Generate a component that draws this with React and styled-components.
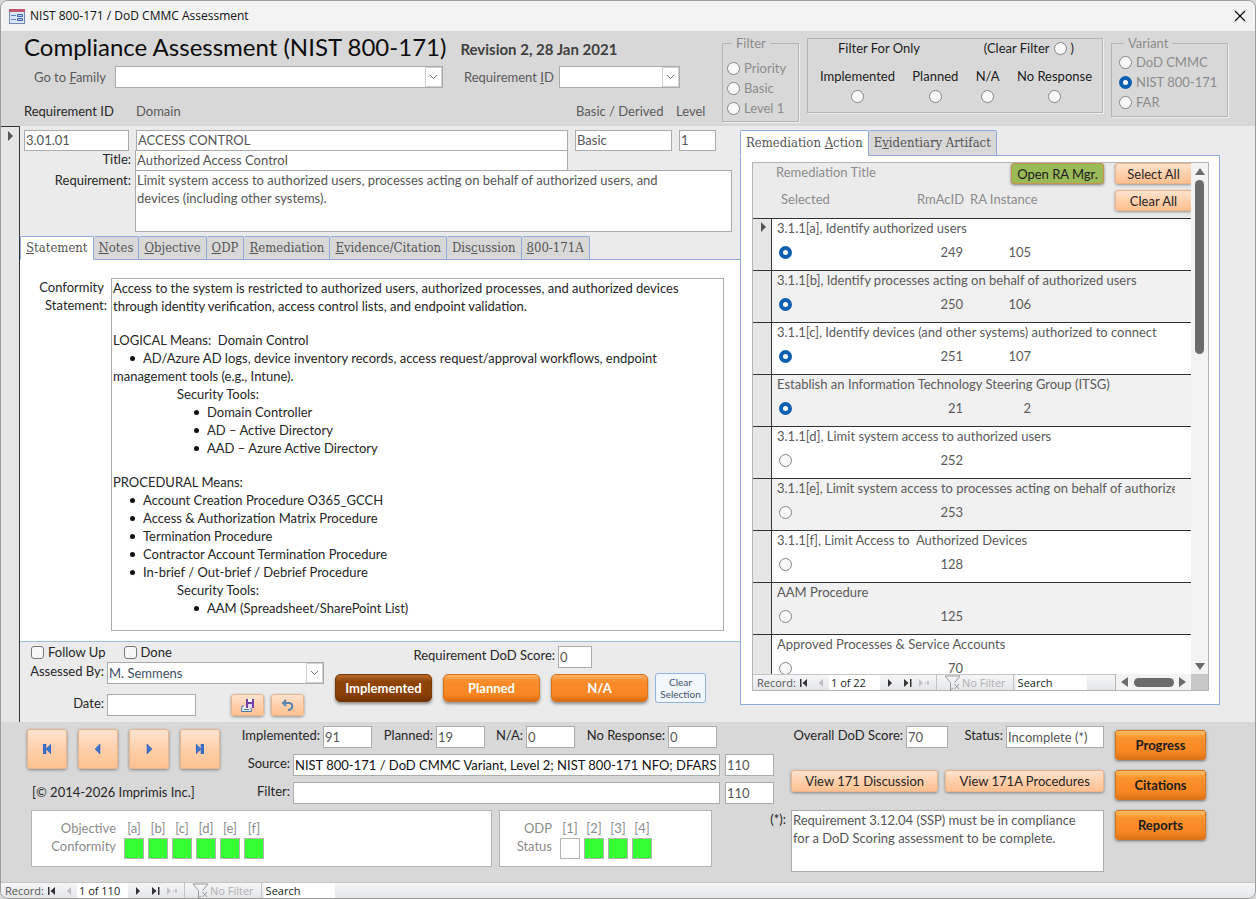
import { useState } from 'react';
import styled, { createGlobalStyle, css } from 'styled-components';

const statementTabs = [
    ['', 'S', 'tatement'],
    ['', 'N', 'otes'],
    ['', 'O', 'bjective'],
    ['', 'O', 'DP'],
    ['', 'R', 'emediation'],
    ['', 'E', 'vidence/Citation'],
    ['Dis', 'c', 'ussion'],
    ['', '8', '00-171A'],
];

const actionTabs = [
    ['Remediation ', 'A', 'ction'],
    ['E', 'v', 'identiary Artifact'],
];

const actions = [
    { title: '3.1.1[a], Identify authorized users', id: 249, instance: 105, selected: true },
    { title: '3.1.1[b], Identify processes acting on behalf of authorized users', id: 250, instance: 106, selected: true },
    { title: '3.1.1[c], Identify devices (and other systems) authorized to connect', id: 251, instance: 107, selected: true },
    { title: 'Establish an Information Technology Steering Group (ITSG)', id: 21, instance: 2, selected: true },
    { title: '3.1.1[d], Limit system access to authorized users', id: 252 },
    { title: '3.1.1[e], Limit system access to processes acting on behalf of authorized users', id: 253 },
    { title: '3.1.1[f], Limit Access to  Authorized Devices', id: 128 },
    { title: 'AAM Procedure', id: 125 },
    { title: 'Approved Processes & Service Accounts', id: 70 },
];

const requirementText = 'Limit system access to authorized users, processes acting on behalf of authorized users, and\ndevices (including other systems).';
const noteText = 'Requirement 3.12.04 (SSP) must be in compliance\nfor a DoD Scoring assessment to be complete.';

const App = () => {
    return (
        <>
            <GlobalStyle />
            <Window>
                <TitleBar>
                    <FormIcon />
                    <span>NIST 800-171 / DoD CMMC Assessment</span>
                    <CloseButton aria-label="Close">
                        <svg width="12" height="12" viewBox="0 0 12 12" stroke="#111" strokeWidth="1.2">
                            <path d="M1 1L11 11M11 1L1 11" />
                        </svg>
                    </CloseButton>
                </TitleBar>
                <FormHeader />
                <Detail>
                    <RecordSelector><RightArrow /></RecordSelector>
                    <RequirementForm />
                    <RemediationPane />
                </Detail>
                <FormFooter />
                <RecordNav position="1 of 110" />
            </Window>
        </>
    );
};

/* top band: title, go-to combos and filters */
const FormHeader = () => {
    const [variant, setVariant] = useState('NIST 800-171');

    return (
        <Header>
            <HeaderMain>
                <TitleRow>
                    <h1>Compliance Assessment (NIST 800-171)</h1>
                    <strong>Revision 2, 28 Jan 2021</strong>
                </TitleRow>
                <GoToRow>
                    <label htmlFor="family">Go to <u>F</u>amily</label>
                    <Combo id="family" grow />
                    <label htmlFor="goto-req">Requirement <u>I</u>D</label>
                    <Combo id="goto-req" width={121} />
                </GoToRow>
                <ColumnTitles>
                    <b>Requirement ID</b>
                    <span>Domain</span>
                    <span>Basic / Derived</span>
                    <span>Level</span>
                </ColumnTitles>
            </HeaderMain>
            <Group $width={77} $pad="6px 0 3px 4px">
                <legend>Filter</legend>
                {['Priority', 'Basic', 'Level 1'].map(name => (
                    <RadioLine key={name}><Radio name="filter" />{name}</RadioLine>
                ))}
            </Group>
            <FilterOnly>
                <FilterOnlyTitle>
                    <span>Filter For Only</span>
                    <label>(Clear Filter <Radio name="only" />)</label>
                </FilterOnlyTitle>
                <FilterOnlyOptions>
                    {['Implemented', 'Planned', 'N/A', 'No Response'].map(name => (
                        <label key={name}>{name}<Radio name="only" /></label>
                    ))}
                </FilterOnlyOptions>
            </FilterOnly>
            <Group $width={117} $pad="0 0 4px 7px">
                <legend>Variant</legend>
                {['DoD CMMC', 'NIST 800-171', 'FAR'].map(name => (
                    <RadioLine key={name}>
                        <Radio name="variant" checked={variant === name} onChange={() => setVariant(name)} />
                        {name}
                    </RadioLine>
                ))}
            </Group>
        </Header>
    );
};

/* left side of the detail section */
const RequirementForm = () => {
    const [tab, setTab] = useState(0);

    return (
        <FormColumn>
            <FieldGrid>
                <Field aria-label="Requirement ID" defaultValue="3.01.01" />
                <Field aria-label="Domain" defaultValue="ACCESS CONTROL" />
                <Field aria-label="Basic / Derived" defaultValue="Basic" />
                <Field aria-label="Level" defaultValue="1" />
            </FieldGrid>
            <TitleGrid>
                <label htmlFor="title">Title:</label>
                <Field id="title" defaultValue="Authorized Access Control" />
            </TitleGrid>
            <RequirementGrid>
                <label htmlFor="requirement">Requirement:</label>
                <TextArea id="requirement" $height={62} defaultValue={requirementText} />
            </RequirementGrid>
            <Tabs items={statementTabs} active={tab} onSelect={setTab} />
            <StatementPanel>
                <span id="conformity">Conformity&nbsp;<br />Statement:</span>
                <RichText
                    role="textbox"
                    aria-multiline="true"
                    aria-labelledby="conformity"
                    contentEditable
                    suppressContentEditableWarning
                >
                    <section>
                        Access to the system is restricted to authorized users, authorized processes, and authorized devices
                        through identity verification, access control lists, and endpoint validation.
                    </section>
                    <section>
                        LOGICAL Means:&nbsp; Domain Control
                        <ul>
                            <li>AD/Azure AD logs, device inventory records, access request/approval workflows, endpoint<br />management tools (e.g., Intune).</li>
                        </ul>
                        <Nested>
                            Security Tools:
                            <ul>
                                <li>Domain Controller</li>
                                <li>AD – Active Directory</li>
                                <li>AAD – Azure Active Directory</li>
                            </ul>
                        </Nested>
                    </section>
                    <section>
                        PROCEDURAL Means:
                        <ul>
                            <li>Account Creation Procedure O365_GCCH</li>
                            <li>Access &amp; Authorization Matrix Procedure</li>
                            <li>Termination Procedure</li>
                            <li>Contractor Account Termination Procedure</li>
                            <li>In-brief / Out-brief / Debrief Procedure</li>
                        </ul>
                        <Nested>
                            Security Tools:
                            <ul>
                                <li>AAM (Spreadsheet/SharePoint List)</li>
                            </ul>
                        </Nested>
                    </section>
                </RichText>
            </StatementPanel>
            <Assessment>
                <AssessedBy>
                    <Checks>
                        <label><CheckBox type="checkbox" />Follow Up</label>
                        <label><CheckBox type="checkbox" />Done</label>
                    </Checks>
                    <AssessRow>
                        <label htmlFor="assessor">Assessed By:</label>
                        <Combo id="assessor" grow value="M. Semmens" />
                    </AssessRow>
                    <AssessRow $gap={10}>
                        <label htmlFor="date">Date:</label>
                        <Field id="date" $width={89} />
                        <IconButtons>
                            <PeachButton $width={33} aria-label="Save"><SaveIcon /></PeachButton>
                            <PeachButton $width={33} aria-label="Undo"><UndoIcon /></PeachButton>
                        </IconButtons>
                    </AssessRow>
                </AssessedBy>
                <ScoreColumn>
                    <Score>
                        <label htmlFor="req-score">Requirement DoD Score:</label>
                        <Field id="req-score" $width={34} defaultValue="0" />
                    </Score>
                    <StatusButtons>
                        <StatusButton $pressed>Implemented</StatusButton>
                        <StatusButton>Planned</StatusButton>
                        <StatusButton>N/A</StatusButton>
                        <ClearButton>Clear<br />Selection</ClearButton>
                    </StatusButtons>
                </ScoreColumn>
            </Assessment>
        </FormColumn>
    );
};

/* right side: remediation subform */
const RemediationPane = () => {
    const [tab, setTab] = useState(0);
    const [selected, setSelected] = useState(actions.map(a => !!a.selected));

    const toggle = index => setSelected(selected.map((s, i) => (i === index ? !s : s)));
    const setAll = value => setSelected(actions.map(() => value));

    return (
        <Pane>
            <Tabs items={actionTabs} active={tab} onSelect={setTab} tall />
            <PanePanel>
                <Subform>
                    <SubBody>
                        <SubContent>
                            <SubHeader>
                                <SubTitles>
                                    <span>Remediation Title</span>
                                    <div>
                                        <span>Selected</span>
                                        <span>RmAcID</span>
                                        <span>RA Instance</span>
                                    </div>
                                </SubTitles>
                                <ManagerButton>Open RA Mgr.</ManagerButton>
                                <SelectButtons>
                                    <PeachButton onClick={() => setAll(true)}>Select All</PeachButton>
                                    <PeachButton onClick={() => setAll(false)}>Clear All</PeachButton>
                                </SelectButtons>
                            </SubHeader>
                            <ActionList>
                                {actions.map((action, i) => (
                                    <ActionRow key={action.id}>
                                        <ActionSelector>{i === 0 && <RightArrow />}</ActionSelector>
                                        <ActionCell>
                                            <p>{action.title}</p>
                                            <ActionValues>
                                                <Radio
                                                    aria-label={action.title}
                                                    checked={selected[i]}
                                                    onClick={() => toggle(i)}
                                                    onChange={() => {}}
                                                />
                                                <span>{action.id}</span>
                                                <span>{action.instance}</span>
                                            </ActionValues>
                                        </ActionCell>
                                    </ActionRow>
                                ))}
                            </ActionList>
                        </SubContent>
                        <VScroll>
                            <svg width="10" height="7" viewBox="0 0 10 7" fill="#6b6b6b"><path d="M5 0L10 7H0Z" /></svg>
                            <VThumb />
                            <svg width="10" height="7" viewBox="0 0 10 7" fill="#6b6b6b"><path d="M0 0H10L5 7Z" /></svg>
                        </VScroll>
                    </SubBody>
                    <SubFoot>
                        <RecordNav position="1 of 22" />
                        <HScroll>
                            <svg width="7" height="10" viewBox="0 0 7 10" fill="#6b6b6b"><path d="M7 0V10L0 5Z" /></svg>
                            <HThumb />
                            <svg width="7" height="10" viewBox="0 0 7 10" fill="#6b6b6b"><path d="M0 0L7 5L0 10Z" /></svg>
                        </HScroll>
                        <ScrollCorner />
                    </SubFoot>
                </Subform>
            </PanePanel>
        </Pane>
    );
};

const FormFooter = () => {
    return (
        <Footer>
            <FooterMain>
                <FooterTop>
                    <FooterNav>
                        <NavButtons>
                            <NavButton aria-label="First record"><NavIcon d="M0 0H3V10H0ZM8 0V10L3 5Z" /></NavButton>
                            <NavButton aria-label="Previous record"><NavIcon d="M6 0V10L1 5Z" /></NavButton>
                            <NavButton aria-label="Next record"><NavIcon d="M2 0L7 5L2 10Z" /></NavButton>
                            <NavButton aria-label="Last record"><NavIcon d="M0 0L5 5L0 10ZM5 0H8V10H5Z" /></NavButton>
                        </NavButtons>
                        <span>[© 2014-2026 Imprimis Inc.]</span>
                    </FooterNav>
                    <FooterFields>
                        <Totals>
                            <label>Implemented:<Field $width={49} defaultValue="91" /></label>
                            <label>Planned:<Field $width={49} defaultValue="19" /></label>
                            <label>N/A:<Field $width={49} defaultValue="0" /></label>
                            <label>No Response:<Field $width={49} defaultValue="0" /></label>
                        </Totals>
                        <SourceRow>
                            <label htmlFor="source">Source:</label>
                            <Field id="source" $dark defaultValue="NIST 800-171 / DoD CMMC Variant, Level 2; NIST 800-171 NFO; DFARS" />
                            <Field aria-label="Source count" defaultValue="110" />
                        </SourceRow>
                        <SourceRow>
                            <label htmlFor="filter-text">Filter:</label>
                            <Field id="filter-text" />
                            <Field aria-label="Filter count" defaultValue="110" />
                        </SourceRow>
                    </FooterFields>
                </FooterTop>
                <StatusBoxes>
                    <StatusBox $grow>
                        <StatusLabel $width={84}>Objective<br />Conformity</StatusLabel>
                        {['a', 'b', 'c', 'd', 'e', 'f'].map(key => <StatusFlag key={key} name={key} met />)}
                    </StatusBox>
                    <StatusBox>
                        <StatusLabel $width={52}>ODP<br />Status</StatusLabel>
                        {['1', '2', '3', '4'].map(key => <StatusFlag key={key} name={key} met={key !== '1'} />)}
                    </StatusBox>
                </StatusBoxes>
            </FooterMain>
            <ScorePane>
                <Overall>
                    <label>Overall DoD Score:<Field $width={42} defaultValue="70" /></label>
                    <label>Status:<Field $width={98} defaultValue="Incomplete (*)" /></label>
                </Overall>
                <ViewButtons>
                    <PeachButton>View 171 Discussion</PeachButton>
                    <PeachButton>View 171A Procedures</PeachButton>
                </ViewButtons>
                <Note>
                    <label htmlFor="note">(*):</label>
                    <TextArea id="note" $height={62} defaultValue={noteText} />
                </Note>
            </ScorePane>
            <ReportButtons>
                <OrangeButton>Progress</OrangeButton>
                <OrangeButton>Citations</OrangeButton>
                <OrangeButton>Reports</OrangeButton>
            </ReportButtons>
        </Footer>
    );
};

const Tabs = ({ items, active, onSelect, tall }) => (
    <TabStrip role="tablist">
        {items.map(([before, key, after], i) => (
            <Tab
                key={before + key + after}
                role="tab"
                aria-selected={i === active}
                $active={i === active}
                $tall={tall}
                onClick={() => onSelect(i)}
            >
                {before}<u>{key}</u>{after}
            </Tab>
        ))}
    </TabStrip>
);

const Combo = ({ id, value = '', width, grow }) => (
    <ComboBox $width={width} $grow={grow}>
        <select id={id} defaultValue={value}>
            <option>{value}</option>
        </select>
        <ComboArrow>
            <svg width="9" height="6" viewBox="0 0 9 6" fill="none" stroke="#777"><path d="M1 1L4.5 4.5L8 1" /></svg>
        </ComboArrow>
    </ComboBox>
);

const StatusFlag = ({ name, met }) => (
    <Flag>
        <span>[{name}]</span>
        <FlagLight $met={met} />
    </Flag>
);

const RecordNav = ({ position }) => (
    <NavBar>
        <NavLabel>Record:</NavLabel>
        <NavStep aria-label="First"><svg width="8" height="8" viewBox="0 0 8 8" fill="#333"><path d="M0 0H1.5V8H0ZM7 0V8L2.500 4Z" /></svg></NavStep>
        <NavStep aria-label="Previous"><svg width="8" height="8" viewBox="0 0 8 8" fill="#bbb"><path d="M6 0V8L2 4Z" /></svg></NavStep>
        <NavField aria-label="Record position" $width={51} defaultValue={position} />
        <NavStep aria-label="Next" $wide><svg width="8" height="8" viewBox="0 0 8 8" fill="#333"><path d="M2 0L6 4L2 8Z" /></svg></NavStep>
        <NavStep aria-label="Last"><svg width="8" height="8" viewBox="0 0 8 8" fill="#333"><path d="M0 0L4.500 4L0 8ZM6 0H7.500V8H6Z" /></svg></NavStep>
        <NavStep aria-label="New"><svg width="12" height="8" viewBox="0 0 12 8" fill="#c4c4c4"><path d="M0 0L4 4L0 8ZM6 3H7V5H6ZM8 2H10V6H8Z" /></svg></NavStep>
        <NavFilter>
            <svg width="17" height="16" viewBox="0 0 17 16" fill="none" stroke="#9a9a9a">
                <path d="M1 1H16L10.500 7.500M1 1L6.500 7.500V15L9 13M10.500 9L15 14M15 9L10.500 14" />
            </svg>
            No Filter
        </NavFilter>
        <NavField aria-label="Search" $width={71} defaultValue="Search" />
    </NavBar>
);

const Radio = props => <RadioInput type="radio" {...props} />;

const RightArrow = () => (
    <svg width="5" height="10" viewBox="0 0 5 10" fill="#555"><path d="M0 0L5 5L0 10Z" /></svg>
);

const NavIcon = ({ d }) => (
    <svg width="8" height="10" viewBox="0 0 8 10">
        <path d={d} fill="#3f74cf" stroke="#2450a8" strokeWidth="0.5" />
    </svg>
);

const FormIcon = () => (
    <svg width="16" height="15" viewBox="0 0 16 15">
        <rect x="0.5" y="0.5" width="15" height="14" fill="#dbe7f8" stroke="#6f88b8" />
        <rect x="0" y="0" width="16" height="3" fill="#c0566f" />
        <path d="M2 6.500H7M2 10.500H7" stroke="#5b80c4" />
        <path d="M8.500 5.500H13.500V7.500H8.500ZM8.500 9.500H13.500V11.500H8.500Z" fill="#b9cdf0" stroke="#3f63ac" />
    </svg>
);

const SaveIcon = () => (
    <svg width="14" height="13" viewBox="0 0 14 13">
        <path d="M3 7H1L0.500 12.500H10.500L10 9" fill="#e9f0f8" stroke="#4a7ba8" />
        <path d="M5 0H13V9H5Z" fill="#7340a8" />
        <path d="M7 0H11V3H7Z" fill="#fff" />
        <path d="M7 5H11V9H7Z" fill="#e4d8f2" />
        <path d="M3 10.500H8" stroke="#4a7ba8" />
    </svg>
);

const UndoIcon = () => (
    <svg width="13" height="12" viewBox="0 0 13 12" fill="none" stroke="#5a83ad" strokeWidth="2">
        <path d="M5 1L2 4L5 7M2 4H8C12.500 4 12.500 10.500 7 11" />
    </svg>
);

const GlobalStyle = createGlobalStyle`
    * {
        box-sizing: border-box;
    }

    body {
        margin: 0;
        background: #d8d8d8;
        color: #262626;
        font: 13px/18px Lato, Carlito, sans-serif;
    }

    h1, p, ul, fieldset {
        margin: 0;
        padding: 0;
    }

    button, input, select, textarea {
        font: inherit;
        color: inherit;
        margin: 0;
    }

    button {
        cursor: pointer;
        padding: 0;
        white-space: nowrap;
    }

    label {
        white-space: nowrap;
    }
`

const Window = styled.main`
    display: flex;
    flex-direction: column;
    min-width: 1180px;
    min-height: 100vh;
    border: 1px solid #9c9c9c;
    border-radius: 8px;
    overflow: hidden;
    background: #ebebeb;
`

const TitleBar = styled.div`
    display: flex;
    align-items: center;
    gap: 5px;
    height: 30px;
    padding: 0 8px;
    background: #f3f3f3;
    color: #111;
    font: 12px/16px "Open Sans", "Noto Sans", sans-serif;
`

const CloseButton = styled.button`
    display: flex;
    margin-left: auto;
    padding: 1px;
    border: 0;
    background: none;
`

const Header = styled.header`
    display: flex;
    align-items: flex-start;
    gap: 8px;
    padding: 0 27px 0 23px;
    background: #d8d8d8;
    color: #5a5a5a;
`

const HeaderMain = styled.div`
    flex: 1;
    padding-bottom: 6px;
`

const TitleRow = styled.div`
    display: flex;
    align-items: center;
    gap: 14px;
    height: 32px;
    margin-bottom: 3px;

    h1 {
        font-size: 24px;
        font-weight: normal;
        line-height: 32px;
        color: #0c0c0c;
        white-space: nowrap;
    }

    strong {
        padding-top: 4px;
        font-size: 15px;
        color: #404040;
    }
`

const GoToRow = styled.div`
    display: flex;
    align-items: center;
    gap: 6px;
    padding: 0 34px 0 10px;

    label:first-of-type {
        width: 75px;
    }

    label:nth-of-type(2) {
        width: 89px;
        margin-left: 15px;
    }
`

const ColumnTitles = styled.div`
    display: grid;
    grid-template-columns: 112px 1fr 100px 38px;
    margin-top: 14px;

    b {
        font-weight: normal;
        color: #262626;
    }
`

const ComboBox = styled.div`
    position: relative;
    flex: ${({ $grow }) => ($grow ? '1' : 'none')};
    width: ${({ $width }) => ($width ? `${$width}px` : 'auto')};

    select {
        appearance: none;
        display: block;
        width: 100%;
        height: 22px;
        padding: 0 18px 0 1px;
        border: 1px solid #ababab;
        border-radius: 0;
        background: #fff;
        color: #3d4d63;
    }
`

const ComboArrow = styled.span`
    position: absolute;
    top: 1px;
    right: 1px;
    bottom: 1px;
    display: flex;
    align-items: center;
    justify-content: center;
    width: 17px;
    border: 1px solid #d0d0d0;
    background: #fff;
    pointer-events: none;
`

const Group = styled.fieldset`
    width: ${({ $width }) => $width}px;
    margin-top: 3px;
    padding: ${({ $pad }) => $pad};
    border: 1px solid #b4b4b4;
    box-shadow: 1px 1px #efefef;
    color: #8c8c8c;

    legend {
        margin-left: 5px;
        padding: 0 4px;
        background: #d8d8d8;
    }
`

const RadioLine = styled.label`
    display: flex;
    align-items: center;
    gap: 4px;
    height: 20px;
`

const RadioInput = styled.input`
    appearance: none;
    flex: none;
    width: 13px;
    height: 13px;
    border: 1px solid #858585;
    border-radius: 50%;
    background: #f9f9f9;

    &:checked {
        border: 4px solid #0b5fb0;
        background: #fff;
    }
`

const FilterOnly = styled.div`
    width: 296px;
    height: 75px;
    margin-top: 7px;
    padding: 0 10px 0 12px;
    border: 1px solid #b4b4b4;
    box-shadow: 1px 1px #efefef;
    color: #1c1c1c;
`

const FilterOnlyTitle = styled.div`
    display: flex;
    justify-content: space-between;
    margin-bottom: 10px;
    padding: 0 18px;

    label {
        display: flex;
        align-items: center;
        gap: 4px;
    }
`

const FilterOnlyOptions = styled.div`
    display: flex;
    justify-content: space-between;

    label {
        display: flex;
        flex-direction: column;
        align-items: center;
        gap: 5px;
    }
`

const Detail = styled.div`
    display: flex;
    flex: 1;
    padding-right: 35px;
`

const RecordSelector = styled.div`
    width: 19px;
    padding: 4px 0 0 7px;
    border-top: 1px solid #333;
    border-right: 1px solid #333;
    background: #e6e6e6;
    line-height: 10px;
`

const FormColumn = styled.section`
    display: flex;
    flex: 3 1 0;
    flex-direction: column;
    min-width: 0;
    padding-top: 4px;
`

const Field = styled.input`
    min-width: 0;
    width: ${({ $width }) => ($width ? `${$width}px` : '100%')};
    height: 22px;
    padding: 0 1px 1px;
    border: 1px solid #ababab;
    background: #fff;
    color: ${({ $dark }) => ($dark ? '#111' : '#555')};
`

const TextArea = styled.textarea`
    display: block;
    width: 100%;
    height: ${({ $height }) => $height}px;
    padding: 0 1px;
    border: 1px solid #ababab;
    background: #fff;
    color: #555;
    resize: none;
    overflow: hidden;
`

const FieldGrid = styled.div`
    display: grid;
    grid-template-columns: 105px 1fr 97px 37px;
    gap: 7px;
    margin-bottom: -1px;
    padding: 0 24px 0 4px;

    input {
        height: 21px;
    }
`

const labelled = css`
    display: grid;
    gap: 4px;

    label {
        text-align: right;
    }
`

const TitleGrid = styled.div`
    ${labelled}
    grid-template-columns: 111px 1fr;
    margin-bottom: -1px;
    padding-right: 172px;

    input {
        height: 21px;
    }
`

const RequirementGrid = styled.div`
    ${labelled}
    grid-template-columns: 111px 1fr;
    padding-right: 8px;

    label {
        padding-top: 1px;
    }
`

const TabStrip = styled.div`
    display: flex;
    margin-top: 4px;
`

const Tab = styled.button`
    height: ${({ $tall }) => ($tall ? 26 : 24)}px;
    margin-bottom: -1px;
    padding: 0 5px;
    border: 1px solid #8faadc;
    border-left-width: ${({ $active }) => ($active ? 1 : 0)}px;
    border-bottom-color: ${({ $active }) => ($active ? '#fff' : '#8faadc')};
    border-radius: 2px 2px 0 0;
    background: ${({ $active }) => ($active ? '#fff' : '#d8d8d8')};
    color: #555;
    font: 13px/18px "DejaVu Serif Condensed", "DejaVu Serif", serif;
    z-index: 1;
`

const StatementPanel = styled.div`
    display: grid;
    flex: 1;
    grid-template-columns: 87px 1fr;
    gap: 4px;
    padding: 18px 16px 10px 0;
    border-top: 1px solid #8faadc;
    border-bottom: 1px solid #9dbce0;
    background: #fff;
    text-align: right;
`

const RichText = styled.div`
    padding: 0 1px;
    border: 1px solid #ababab;
    text-align: left;
    outline: none;

    section + section {
        margin-top: 16px;
    }

    ul {
        list-style: none;
    }

    li {
        text-indent: 17px;
    }

    li::before {
        content: '';
        display: inline-block;
        width: 5px;
        height: 5px;
        margin-right: 8px;
        border-radius: 50%;
        background: #111;
        vertical-align: 2px;
    }
`

const Nested = styled.div`
    padding-left: 64px;
`

const Assessment = styled.div`
    display: flex;
    gap: 11px;
    height: 80px;
`

const AssessedBy = styled.div`
    width: 304px;
`

const Checks = styled.div`
    display: flex;
    gap: 18px;
    padding-left: 11px;

    label {
        display: flex;
        align-items: center;
        gap: 4px;
        height: 20px;
    }
`

const CheckBox = styled.input`
    appearance: none;
    width: 13px;
    height: 13px;
    border: 1px solid #777;
    border-radius: 3px;
    background: #f7f7f7;

    &:checked {
        background: #0b5fb0;
    }
`

const AssessRow = styled.div`
    display: flex;
    gap: 3px;
    margin-top: ${({ $gap }) => $gap || 0}px;

    > label {
        width: 84px;
        text-align: right;
    }
`

const IconButtons = styled.div`
    display: flex;
    flex: 1;
    justify-content: flex-end;
    gap: 7px;
    padding-right: 20px;
`

const ScoreColumn = styled.div`
    flex: 1;
    padding-top: 4px;
`

const Score = styled.div`
    display: flex;
    gap: 3px;
    margin-bottom: 5px;
    padding-left: 76px;

    label {
        width: 144px;
        text-align: right;
    }
`

const StatusButtons = styled.div`
    display: flex;
    align-items: center;
    gap: 11px;
`

const StatusButton = styled.button`
    width: 97px;
    height: 28px;
    border: 1px solid ${({ $pressed }) => ($pressed ? '#7a3a08' : '#d9751c')};
    border-radius: 5px;
    background: ${({ $pressed }) => ($pressed
        ? 'linear-gradient(#b86a2c, #8f4408 25%, #8a3f06 75%, #6f3204)'
        : 'linear-gradient(#ffb066, #fb8c2a 25%, #f98622 75%, #d96c12)')};
    box-shadow: 0 2px 3px rgba(0, 0, 0, 0.4);
    color: #fff;
    font-weight: bold;
`

const ClearButton = styled.button`
    width: 51px;
    height: 30px;
    margin-left: -4px;
    border: 1px solid #8fb4e0;
    border-radius: 3px;
    background: #f2f7fd;
    color: #44546a;
    font-size: 10px;
    line-height: 12px;
`

const PeachButton = styled.button`
    display: flex;
    flex: ${({ $width }) => ($width ? 'none' : '1 1 auto')};
    align-items: center;
    justify-content: center;
    width: ${({ $width }) => ($width ? `${$width}px` : 'auto')};
    height: 22px;
    border: 1px solid #eeb48a;
    border-radius: 3px;
    background: linear-gradient(#ffe3cf, #ffd0ac 50%, #ffc191);
    box-shadow: 0 1px 3px rgba(0, 0, 0, 0.4);
    color: #262626;
`

const Pane = styled.section`
    display: flex;
    flex: 2 1 0;
    flex-direction: column;
    min-width: 0;
    padding-bottom: 17px;
`

const PanePanel = styled.div`
    display: flex;
    flex: 1;
    padding: 6px 10px 13px 11px;
    border: 1px solid #8faadc;
    background: #fff;
`

const Subform = styled.div`
    display: flex;
    flex: 1;
    flex-direction: column;
    min-width: 0;
    border: 1px solid #b4b4b4;
`

const SubBody = styled.div`
    display: flex;
    flex: 1 1 0;
    min-height: 0;
`

const SubContent = styled.div`
    display: flex;
    flex: 1;
    flex-direction: column;
    min-width: 0;
`

const SubHeader = styled.div`
    display: flex;
    flex: none;
    height: 56px;
    overflow: hidden;
    border-bottom: 1px solid #333;
    background: #ebebeb;
    color: #8c8c8c;
`

const SubTitles = styled.div`
    flex: 1;
    min-width: 0;
    padding-left: 23px;
    white-space: nowrap;

    div {
        display: grid;
        grid-template-columns: 136px 53px auto;
        margin-top: 9px;
        padding-left: 5px;
    }
`

const ManagerButton = styled.button`
    flex: none;
    width: 93px;
    height: 21px;
    border: 1px solid #c9904e;
    border-radius: 3px;
    background: #9bbb59;
    box-shadow: 0 1px 3px rgba(0, 0, 0, 0.5);
    color: #1c1c1c;
`

const SelectButtons = styled.div`
    display: flex;
    flex: none;
    flex-direction: column;
    gap: 6px;
    width: 76px;
    margin-left: 11px;

    button {
        flex: none;
        height: 21px;
        border-right: 0;
        border-radius: 3px 0 0 3px;
    }
`

const ActionList = styled.ul`
    flex: 1;
    min-height: 0;
    overflow: hidden;
    list-style: none;
`

const ActionRow = styled.li`
    display: flex;
    height: 52px;
    border-bottom: 1px solid #333;
    background: #fff;
    color: #5a5a5a;

    &:nth-child(even) {
        background: #f1f1f1;
    }
`

const ActionSelector = styled.div`
    flex: none;
    width: 19px;
    padding: 3px 0 0 8px;
    border-right: 1px solid #333;
    background: #e6e6e6;
    line-height: 10px;
`

const ActionCell = styled.div`
    flex: 1;
    min-width: 0;
    padding-left: 5px;

    p {
        margin-right: 16px;
        overflow: hidden;
        white-space: pre;
    }
`

const ActionValues = styled.div`
    display: flex;
    align-items: center;
    margin-top: 6px;
    padding-left: 2px;

    span {
        width: 68px;
        text-align: right;
    }

    span:first-of-type {
        margin-left: 103px;
    }
`

const VScroll = styled.div`
    display: flex;
    flex-direction: column;
    align-items: center;
    width: 17px;
    padding: 5px 0 4px;
    background: #f3f3f3;

    svg:last-child {
        margin-top: auto;
    }
`

const VThumb = styled.div`
    width: 9px;
    height: 174px;
    margin-top: 5px;
    border-radius: 5px;
    background: #6b6b6b;
`

const SubFoot = styled.div`
    display: flex;
    height: 16px;
`

const HScroll = styled.div`
    display: flex;
    flex: none;
    align-items: center;
    justify-content: space-between;
    width: 76px;
    padding: 0 5px;
    border-left: 1px solid #b4b4b4;
    background: #f3f3f3;
`

const HThumb = styled.div`
    width: 40px;
    height: 9px;
    border-radius: 5px;
    background: #6b6b6b;
`

const ScrollCorner = styled.div`
    flex: none;
    width: 17px;
    background: #c8c8c8;
`

const Footer = styled.footer`
    display: flex;
    padding: 4px 49px 10px 26px;
    background: #d8d8d8;
`

const FooterMain = styled.div`
    flex: 1;
    min-width: 0;
`

const FooterTop = styled.div`
    display: flex;
    margin-bottom: 6px;
`

const FooterNav = styled.div`
    padding-top: 3px;

    span {
        display: block;
        margin-top: 14px;
        padding-left: 5px;
    }
`

const NavButtons = styled.div`
    display: flex;
    gap: 11px;
    width: 204px;
`

const NavButton = styled(PeachButton)`
    flex: none;
    width: 40px;
    height: 40px;
`

const FooterFields = styled.div`
    display: flex;
    flex: 1;
    flex-direction: column;
    gap: 6px;
    min-width: 0;
`

const Totals = styled.div`
    display: grid;
    grid-template-columns: 134px 113px 90px 142px;
    padding-left: 7px;

    label {
        display: flex;
        justify-content: flex-end;
        gap: 3px;
    }
`

const SourceRow = styled.div`
    display: grid;
    grid-template-columns: 59px 1fr 51px;
    column-gap: 3px;

    label {
        text-align: right;
    }

    input:last-child {
        width: 49px;
        justify-self: end;
    }
`

const StatusBoxes = styled.div`
    display: flex;
    gap: 7px;
    padding: 0 62px 0 4px;
`

const StatusBox = styled.div`
    display: flex;
    gap: 4px;
    width: ${({ $grow }) => ($grow ? 'auto' : '213px')};
    flex: ${({ $grow }) => ($grow ? '1' : 'none')};
    height: 57px;
    padding-top: 8px;
    border: 1px solid #b4b4b4;
    background: #fff;
    color: #8c8c8c;
`

const StatusLabel = styled.div`
    width: ${({ $width }) => $width}px;
    margin-right: 4px;
    text-align: right;
`

const Flag = styled.div`
    display: flex;
    flex-direction: column;
    align-items: center;
    gap: 1px;
    width: 20px;
`

const FlagLight = styled.i`
    width: 20px;
    height: 21px;
    border: 1px solid #b4b4b4;
    background: ${({ $met }) => ($met ? '#33ff33' : '#fff')};
`

const ScorePane = styled.div`
    display: flex;
    flex: none;
    flex-direction: column;
    width: 330px;
`

const Overall = styled.div`
    display: grid;
    grid-template-columns: 174px 1fr;

    label {
        display: flex;
        justify-content: flex-end;
        gap: 3px;
    }
`

const ViewButtons = styled.div`
    display: flex;
    gap: 7px;
    margin: 22px 0 18px;
    padding-left: 17px;
`

const Note = styled.div`
    display: grid;
    grid-template-columns: auto 313px;
    justify-content: end;
    gap: 5px;
`

const ReportButtons = styled.div`
    display: flex;
    flex-direction: column;
    gap: 10px;
    width: 91px;
    margin: 4px 0 0 11px;
`

const OrangeButton = styled.button`
    height: 30px;
    border: 1px solid #d9751c;
    border-radius: 3px;
    background: linear-gradient(#ffbf66, #fb922c 25%, #f98622 75%, #dc7216);
    box-shadow: 0 1px 3px rgba(0, 0, 0, 0.5);
    color: #1c1c1c;
    font-weight: bold;
`

const NavBar = styled.nav`
    display: flex;
    flex: 1 0 auto;
    align-items: center;
    height: 16px;
    overflow: hidden;
    border-top: 1px solid #c4c4c4;
    background: linear-gradient(#f6f6f8, #e4e6e9);
    color: #555;
    font: 11px/16px "Open Sans", "Noto Sans", sans-serif;

    ${Window} > & {
        flex: none;
    }
`

const NavLabel = styled.span`
    width: 42px;
    padding-left: 4px;
`

const NavStep = styled.button`
    display: flex;
    justify-content: center;
    width: ${({ $wide }) => ($wide ? 19 : 17)}px;
    border: 0;
    background: none;
`

const NavField = styled.input`
    width: ${({ $width }) => $width}px;
    height: 16px;
    padding: 0 2px;
    border: 0;
    background: #fff;
    color: #222;
`

const NavFilter = styled.span`
    display: flex;
    align-items: center;
    gap: 1px;
    margin: 0 2px 0 3px;
    padding: 0 7px;
    border: 1px solid #c4c4c4;
    border-width: 0 1px;
    color: #b0b0b0;
`

export default App;
